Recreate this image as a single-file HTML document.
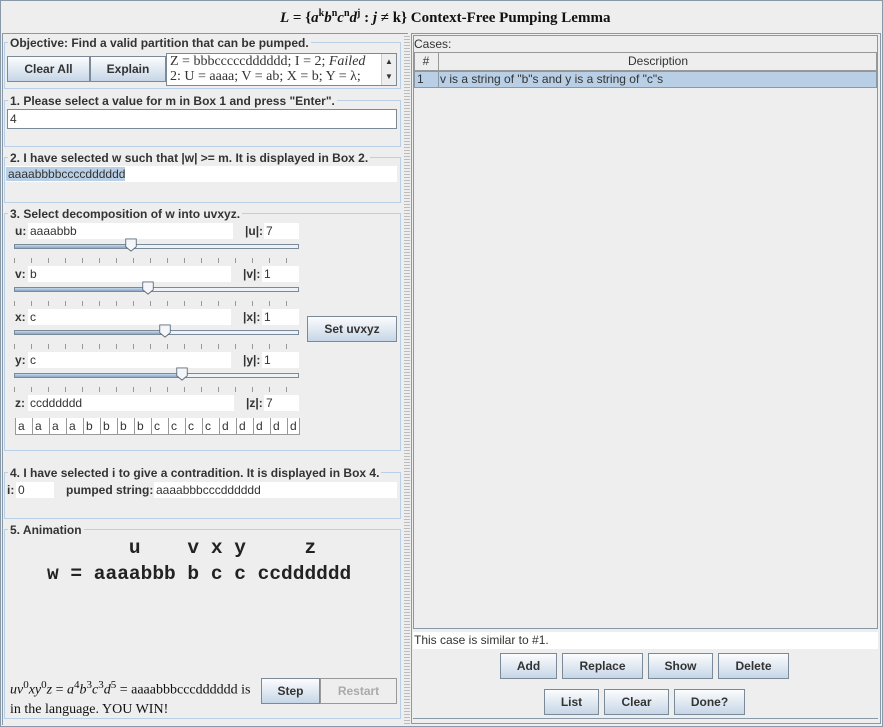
<!DOCTYPE html>
<html><head><meta charset="utf-8"><style>
*{box-sizing:border-box;margin:0;padding:0}
body{width:883px;height:727px;background:#eeeeee;font-family:"Liberation Sans",sans-serif;font-size:12px;color:#333;position:relative;overflow:hidden}
.a{position:absolute}
.grp{position:absolute;border:1px solid #b8cfe5}
.gt{position:absolute;background:#eeeeee;font-weight:bold;font-size:12px;padding:0 2px;color:#333;line-height:14px}
.tf{position:absolute;background:#fff;line-height:16px;padding-left:2px;white-space:nowrap;overflow:hidden}
.btn{position:absolute;border:1px solid #7a8a99;background:linear-gradient(#fbfcfd,#dce6f0 60%,#c6d5e6);font-weight:bold;text-align:center;color:#333}
.lbl{position:absolute;font-weight:bold;line-height:16px}
.track{position:absolute;height:5px;border:1px solid #7a8a99;background:#eef2f6}
.fill{position:absolute;left:0;top:0;height:3px;background:linear-gradient(#c8d8ea,#8aa6c8)}
.thumb{position:absolute;width:14px;height:14px}
.ticks{position:absolute;height:5px;background:repeating-linear-gradient(90deg,#999 0 1px,transparent 1px 17px)}
.cell{position:absolute;top:418px;height:17px;border-left:1px solid #999;border-bottom:1px solid #999;background:#fff;line-height:16px;padding-left:2px}
.serif{font-family:"Liberation Serif",serif}
.mono{font-family:"Liberation Mono",monospace;font-weight:bold;font-size:19.5px;white-space:pre;color:#222}
</style></head><body>
<div class="a" style="left:0;top:0;width:883px;height:727px;border:1px solid #8a99a8"></div>
<div class="a serif" style="left:280px;top:8px;font-size:15px;font-weight:bold;white-space:nowrap;color:#111"><i>L</i> = {<i>a</i><sup style="font-size:10px">k</sup><i>b</i><sup style="font-size:10px">n</sup><i>c</i><sup style="font-size:10px">n</sup><i>d</i><sup style="font-size:10px">j</sup> : <i>j</i> ≠ k} Context-Free Pumping Lemma</div>
<div class="a" style="left:2px;top:33px;width:406px;height:692px;border-top:1px solid #8a99a8;border-left:1px solid #8a99a8"></div>
<div class="a" style="left:404px;top:34px;width:6px;height:690px;background:repeating-linear-gradient(#eee 0 2px,#bbb 2px 3px)"></div>
<!-- objective -->
<div class="grp" style="left:4px;top:42px;width:397px;height:47px"></div>
<div class="gt" style="left:8px;top:36px">Objective: Find a valid partition that can be pumped.</div>
<div class="btn" style="left:7px;top:56px;width:83px;height:26px;line-height:24px">Clear All</div>
<div class="btn" style="left:90px;top:56px;width:76px;height:26px;line-height:24px">Explain</div>
<div class="a serif" style="left:166px;top:53px;width:231px;height:33px;background:#fff;border:1px solid #7a8a99;font-size:14px;line-height:15px;padding-left:3px;white-space:nowrap;overflow:hidden">Z = bbbcccccdddddd; I = 2; <i>Failed</i><br>2: U = aaaa; V = ab; X = b; Y = λ;</div>
<div class="a" style="left:381px;top:54px;width:15px;height:31px;background:#eee;border-left:1px solid #ccc;font-size:8px;text-align:center;line-height:15px">▲<br>▼</div>
<!-- box1 -->
<div class="grp" style="left:4px;top:100px;width:397px;height:47px"></div>
<div class="gt" style="left:8px;top:94px">1. Please select a value for m in Box 1 and press "Enter".</div>
<div class="tf" style="left:7px;top:109px;width:390px;height:20px;border:1px solid #7a8a99;line-height:18px">4</div>
<!-- box2 -->
<div class="grp" style="left:4px;top:157px;width:397px;height:46px"></div>
<div class="gt" style="left:8px;top:151px">2. I have selected w such that |w| &gt;= m. It is displayed in Box 2.</div>
<div class="tf" style="left:6px;top:166px;width:391px;height:16px;padding:0"><span style="background:#b8cfe5;padding-left:2px">aaaabbbbccccdddddd</span></div>
<!-- box3 -->
<div class="grp" style="left:4px;top:213px;width:397px;height:238px"></div>
<div class="gt" style="left:8px;top:207px">3. Select decomposition of w into uvxyz.</div>
<div class="lbl" style="left:15px;top:223px">u:</div><div class="tf" style="left:28px;top:223px;width:205px">aaaabbb</div>
<div class="lbl" style="left:245px;top:223px">|u|:</div><div class="tf" style="left:264px;top:223px;width:35px">7</div>
<div class="track" style="left:14px;top:244px;width:285px"><div class="fill" style="width:120px"></div></div>
<svg class="thumb" style="left:124px;top:238px" viewBox="0 0 14 16" width="14" height="16"><path d="M1 1H13V10L7 15L1 10Z" fill="#f4f6f9" stroke="#5a6a7a"/></svg>
<div class="ticks" style="left:14px;top:258px;width:286px"></div>
<div class="lbl" style="left:15px;top:266px">v:</div><div class="tf" style="left:28px;top:266px;width:203px">b</div>
<div class="lbl" style="left:243px;top:266px">|v|:</div><div class="tf" style="left:262px;top:266px;width:37px">1</div>
<div class="track" style="left:14px;top:287px;width:285px"><div class="fill" style="width:137px"></div></div>
<svg class="thumb" style="left:141px;top:281px" viewBox="0 0 14 16" width="14" height="16"><path d="M1 1H13V10L7 15L1 10Z" fill="#f4f6f9" stroke="#5a6a7a"/></svg>
<div class="ticks" style="left:14px;top:301px;width:286px"></div>
<div class="lbl" style="left:15px;top:309px">x:</div><div class="tf" style="left:28px;top:309px;width:203px">c</div>
<div class="lbl" style="left:243px;top:309px">|x|:</div><div class="tf" style="left:262px;top:309px;width:37px">1</div>
<div class="track" style="left:14px;top:330px;width:285px"><div class="fill" style="width:153px"></div></div>
<svg class="thumb" style="left:158px;top:324px" viewBox="0 0 14 16" width="14" height="16"><path d="M1 1H13V10L7 15L1 10Z" fill="#f4f6f9" stroke="#5a6a7a"/></svg>
<div class="ticks" style="left:14px;top:344px;width:286px"></div>
<div class="lbl" style="left:15px;top:352px">y:</div><div class="tf" style="left:28px;top:352px;width:203px">c</div>
<div class="lbl" style="left:243px;top:352px">|y|:</div><div class="tf" style="left:262px;top:352px;width:37px">1</div>
<div class="track" style="left:14px;top:373px;width:285px"><div class="fill" style="width:170px"></div></div>
<svg class="thumb" style="left:175px;top:367px" viewBox="0 0 14 16" width="14" height="16"><path d="M1 1H13V10L7 15L1 10Z" fill="#f4f6f9" stroke="#5a6a7a"/></svg>
<div class="ticks" style="left:14px;top:387px;width:286px"></div>
<div class="lbl" style="left:15px;top:395px">z:</div><div class="tf" style="left:28px;top:395px;width:206px">ccdddddd</div>
<div class="lbl" style="left:246px;top:395px">|z|:</div><div class="tf" style="left:264px;top:395px;width:35px">7</div>
<div class="cell" style="left:15px;width:17px">a</div><div class="cell" style="left:32px;width:17px">a</div><div class="cell" style="left:49px;width:17px">a</div><div class="cell" style="left:66px;width:17px">a</div><div class="cell" style="left:83px;width:17px">b</div><div class="cell" style="left:100px;width:17px">b</div><div class="cell" style="left:117px;width:17px">b</div><div class="cell" style="left:134px;width:17px">b</div><div class="cell" style="left:151px;width:17px">c</div><div class="cell" style="left:168px;width:17px">c</div><div class="cell" style="left:185px;width:17px">c</div><div class="cell" style="left:202px;width:17px">c</div><div class="cell" style="left:219px;width:17px">d</div><div class="cell" style="left:236px;width:17px">d</div><div class="cell" style="left:253px;width:17px">d</div><div class="cell" style="left:270px;width:17px">d</div><div class="cell" style="left:287px;width:13px;border-right:1px solid #999">d</div>
<div class="btn" style="left:307px;top:316px;width:90px;height:26px;line-height:24px">Set uvxyz</div>
<!-- box4 -->
<div class="grp" style="left:4px;top:472px;width:397px;height:47px"></div>
<div class="gt" style="left:8px;top:466px">4. I have selected i to give a contradition. It is displayed in Box 4.</div>
<div class="lbl" style="left:7px;top:482px">i:</div><div class="tf" style="left:16px;top:482px;width:38px">0</div>
<div class="lbl" style="left:66px;top:482px">pumped string:</div><div class="tf" style="left:154px;top:482px;width:243px">aaaabbbcccdddddd</div>
<!-- box5 -->
<div class="grp" style="left:4px;top:529px;width:397px;height:190px"></div>
<div class="gt" style="left:8px;top:523px">5. Animation</div>
<div class="a mono" style="left:47px;top:537px">       u    v x y     z</div>
<div class="a mono" style="left:47px;top:563px">w = aaaabbb b c c ccdddddd</div>
<div class="a serif" style="left:10px;top:676px;font-size:14px;line-height:19px;color:#111;white-space:nowrap"><i>uv</i><sup style="font-size:11px">0</sup><i>xy</i><sup style="font-size:11px">0</sup><i>z</i> = <i>a</i><sup style="font-size:11px">4</sup><i>b</i><sup style="font-size:11px">3</sup><i>c</i><sup style="font-size:11px">3</sup><i>d</i><sup style="font-size:11px">5</sup> = aaaabbbcccdddddd is<br>in the language. YOU WIN!</div>
<div class="btn" style="left:261px;top:678px;width:59px;height:26px;line-height:24px">Step</div>
<div class="btn" style="left:320px;top:678px;width:77px;height:26px;line-height:24px;background:#eee;color:#aaa;border-color:#999">Restart</div>
<!-- right -->
<div class="a" style="left:411px;top:33px;width:470px;height:691px;border:1px solid #8a99a8"></div>
<div class="a" style="left:413px;top:35px;width:465px;height:594px;border:1px solid #8a99a8"></div>
<div class="a" style="left:414px;top:37px;line-height:14px">Cases:</div>
<div class="a" style="left:414px;top:52px;width:463px;height:19px;border:1px solid #999;background:#eee"></div>
<div class="a" style="left:414px;top:52px;width:25px;height:19px;border-right:1px solid #999;text-align:center;line-height:19px">#</div>
<div class="a" style="left:439px;top:52px;width:438px;text-align:center;line-height:19px">Description</div>
<div class="a" style="left:414px;top:71px;width:463px;height:17px;background:#b8cfe5;border:1px solid #8a99a8"></div>
<div class="a" style="left:438px;top:71px;width:1px;height:17px;background:#8a99a8"></div>
<div class="a" style="left:417px;top:72px;line-height:15px">1</div>
<div class="a" style="left:440px;top:72px;line-height:15px">v is a string of "b"s and y is a string of "c"s</div>
<div class="tf" style="left:413px;top:632px;width:465px;height:17px;padding-left:1px">This case is similar to #1.</div>
<div class="btn" style="left:500px;top:653px;width:57px;height:26px;line-height:24px">Add</div>
<div class="btn" style="left:562px;top:653px;width:81px;height:26px;line-height:24px">Replace</div>
<div class="btn" style="left:648px;top:653px;width:65px;height:26px;line-height:24px">Show</div>
<div class="btn" style="left:718px;top:653px;width:71px;height:26px;line-height:24px">Delete</div>
<div class="btn" style="left:544px;top:689px;width:55px;height:26px;line-height:24px">List</div>
<div class="btn" style="left:604px;top:689px;width:65px;height:26px;line-height:24px">Clear</div>
<div class="btn" style="left:674px;top:689px;width:71px;height:26px;line-height:24px">Done?</div>
<div class="a" style="left:413px;top:718px;width:465px;height:1px;background:#8a99a8"></div>
</body></html>
